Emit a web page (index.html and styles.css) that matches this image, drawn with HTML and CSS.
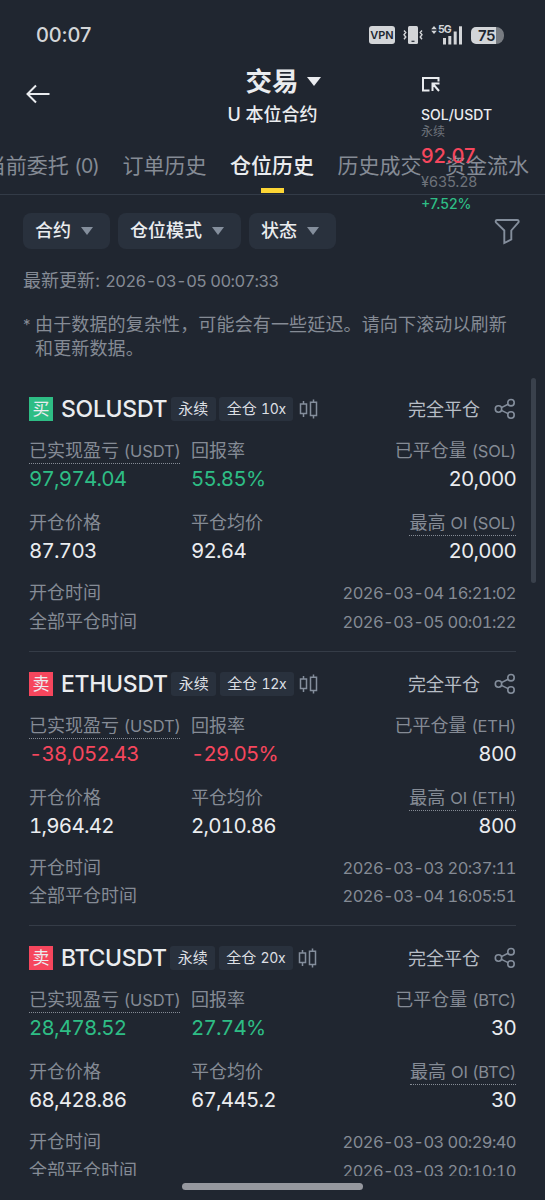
FILE: index.html
```html
<!DOCTYPE html>
<html lang="zh-CN">
<head>
    <meta charset="UTF-8">
    <meta name="viewport" content="width=device-width, initial-scale=1.0">
    <title>仓位历史</title>
    <link rel="stylesheet" href="styles.css">
</head>
<body>
    <!-- shared icons -->
    <svg class="sprite" width="0" height="0">
        <symbol id="icon-candles" viewBox="0 0 20 20">
            <path d="M4.5 2v3M4.5 14.5V18M14.5 0.5v2.7M14.5 16.5v3M1.5 5h6v9.5h-6zM11.5 3.2h6v13.3h-6z"/>
        </symbol>
        <symbol id="icon-share" viewBox="0 0 22 22">
            <circle cx="4.500" cy="11" r="3.200"/>
            <circle cx="17" cy="4.700" r="3.200"/>
            <circle cx="17" cy="17" r="3.200"/>
            <path d="M7.4 9.6l6.7-3.4M7.4 12.4l6.7 3.2"/>
        </symbol>
    </svg>

    <div class="phone">
        <div class="status-bar">
            <span class="clock">00:07</span>
            <div class="status-icons">
                <span class="vpn">VPN</span>
                <svg class="vibrate" width="20" height="20" viewBox="0 0 20 20">
                    <rect x="5" y="1" width="10" height="18" rx="1.5" fill="#d3d5d8"/>
                    <path d="M8.5 16.3h3" stroke="#202630" stroke-width="1.2"/>
                    <path d="M1 5.5l1.8 2L1 9.8l1.8 2.2L1 14.3M19 5.5l-1.8 2L19 9.8l-1.8 2.2 1.8 2.3" fill="none" stroke="#d3d5d8" stroke-width="1.4"/>
                </svg>
                <div class="signal">
                    <svg width="32" height="20" viewBox="0 0 32 20" fill="#d3d5d8">
                        <path d="M0.2 4.3L3 1l2.8 3.3zM0.2 5.7L3 9l2.8-3.300z"/>
                        <rect x="12" y="13" width="3" height="6.5"/>
                        <rect x="17.300" y="11" width="3" height="8.5"/>
                        <rect x="22.700" y="6.5" width="3" height="13"/>
                        <rect x="28" y="1.3" width="3" height="18.2"/>
                    </svg>
                    <span>5G</span>
                </div>
                <span class="battery">75</span>
            </div>
        </div>

        <header class="header">
            <svg class="back" width="26" height="22" viewBox="0 0 26 22">
                <path d="M24.5 11H2.5M11 2.5L2.5 11l8.5 8.5"/>
            </svg>
            <div class="title">
                <h1>交易<span class="caret"></span></h1>
                <p>U 本位合约</p>
            </div>
        </header>

        <nav class="tabs">
            <span>当前委托 <small>(0)</small></span>
            <span>订单历史</span>
            <span class="active">仓位历史</span>
            <span>历史成交</span>
            <span>资金流水</span>
        </nav>

        <div class="filters">
            <button>合约<span class="caret"></span></button>
            <button>仓位模式<span class="caret"></span></button>
            <button>状态<span class="caret"></span></button>
            <svg class="funnel" width="28" height="28" viewBox="0 0 28 28">
                <path d="M4.2 3H24c1.6 0 2.2 1.5 1.2 2.6L18.3 13.5v9L11.3 26V13.5L3.2 5.6C2.2 4.5 2.8 3 4.2 3z"/>
            </svg>
        </div>

        <main class="content">
            <p class="updated">最新更新: <span class="num">2026-03-05 00:07:33</span></p>
            <div class="note">
                <span>*</span>
                <p>由于数据的复杂性，可能会有一些延迟。请向下滚动以刷新<br>和更新数据。</p>
            </div>

            <section class="card">
                <div class="card-head">
                    <span class="side buy">买</span>
                    <h2>SOLUSDT</h2>
                    <span class="tag">永续</span>
                    <span class="tag">全仓 <span class="num">10x</span></span>
                    <svg class="candles"><use href="#icon-candles"/></svg>
                    <span class="state">完全平仓</span>
                    <svg class="share"><use href="#icon-share"/></svg>
                </div>
                <div class="stats">
                    <div>
                        <span class="label dotted">已实现盈亏 <span class="num">(USDT)</span></span>
                        <span class="value green">97,974.04</span>
                    </div>
                    <div>
                        <span class="label">回报率</span>
                        <span class="value green">55.85%</span>
                    </div>
                    <div>
                        <span class="label">已平仓量 <span class="num">(SOL)</span></span>
                        <span class="value">20,000</span>
                    </div>
                    <div>
                        <span class="label">开仓价格</span>
                        <span class="value">87.703</span>
                    </div>
                    <div>
                        <span class="label">平仓均价</span>
                        <span class="value">92.64</span>
                    </div>
                    <div>
                        <span class="label dotted">最高 <span class="num">OI (SOL)</span></span>
                        <span class="value">20,000</span>
                    </div>
                </div>
                <div class="time"><span>开仓时间</span><span class="num">2026-03-04 16:21:02</span></div>
                <div class="time"><span>全部平仓时间</span><span class="num">2026-03-05 00:01:22</span></div>
            </section>

            <section class="card">
                <div class="card-head">
                    <span class="side sell">卖</span>
                    <h2>ETHUSDT</h2>
                    <span class="tag">永续</span>
                    <span class="tag">全仓 <span class="num">12x</span></span>
                    <svg class="candles"><use href="#icon-candles"/></svg>
                    <span class="state">完全平仓</span>
                    <svg class="share"><use href="#icon-share"/></svg>
                </div>
                <div class="stats">
                    <div>
                        <span class="label dotted">已实现盈亏 <span class="num">(USDT)</span></span>
                        <span class="value red">-38,052.43</span>
                    </div>
                    <div>
                        <span class="label">回报率</span>
                        <span class="value red">-29.05%</span>
                    </div>
                    <div>
                        <span class="label">已平仓量 <span class="num">(ETH)</span></span>
                        <span class="value">800</span>
                    </div>
                    <div>
                        <span class="label">开仓价格</span>
                        <span class="value">1,964.42</span>
                    </div>
                    <div>
                        <span class="label">平仓均价</span>
                        <span class="value">2,010.86</span>
                    </div>
                    <div>
                        <span class="label dotted">最高 <span class="num">OI (ETH)</span></span>
                        <span class="value">800</span>
                    </div>
                </div>
                <div class="time"><span>开仓时间</span><span class="num">2026-03-03 20:37:11</span></div>
                <div class="time"><span>全部平仓时间</span><span class="num">2026-03-04 16:05:51</span></div>
            </section>

            <section class="card">
                <div class="card-head">
                    <span class="side sell">卖</span>
                    <h2>BTCUSDT</h2>
                    <span class="tag">永续</span>
                    <span class="tag">全仓 <span class="num">20x</span></span>
                    <svg class="candles"><use href="#icon-candles"/></svg>
                    <span class="state">完全平仓</span>
                    <svg class="share"><use href="#icon-share"/></svg>
                </div>
                <div class="stats">
                    <div>
                        <span class="label dotted">已实现盈亏 <span class="num">(USDT)</span></span>
                        <span class="value green">28,478.52</span>
                    </div>
                    <div>
                        <span class="label">回报率</span>
                        <span class="value green">27.74%</span>
                    </div>
                    <div>
                        <span class="label">已平仓量 <span class="num">(BTC)</span></span>
                        <span class="value">30</span>
                    </div>
                    <div>
                        <span class="label">开仓价格</span>
                        <span class="value">68,428.86</span>
                    </div>
                    <div>
                        <span class="label">平仓均价</span>
                        <span class="value">67,445.2</span>
                    </div>
                    <div>
                        <span class="label dotted">最高 <span class="num">OI (BTC)</span></span>
                        <span class="value">30</span>
                    </div>
                </div>
                <div class="time"><span>开仓时间</span><span class="num">2026-03-03 00:29:40</span></div>
                <div class="time"><span>全部平仓时间</span><span class="num">2026-03-03 20:10:10</span></div>
            </section>
        </main>

        <div class="home-bar"></div>

        <!-- floating price widget -->
        <div class="ticker">
            <svg width="20" height="16" viewBox="0 0 20 16">
                <path d="M8.5 14.5H2V2H17.5V5.500M11.5 15V7.5H18.500M12 8l6 7"/>
            </svg>
            <span class="pair">SOL/USDT</span>
            <span class="kind">永续</span>
            <span class="price">92.07</span>
            <span class="fiat">¥635.28</span>
            <span class="change">+7.52%</span>
        </div>
        <div class="scrollbar"></div>
    </div>
</body>
</html>
```

FILE: styles.css
```css
* {
    box-sizing: border-box;
    margin: 0;
    padding: 0;
}
body {
    font-family: Inter, "Noto Sans CJK SC", sans-serif;
    font-size: 18px;
    background: #202630;
    color: #eaecef;
}
.sprite {
    position: absolute;
}
.phone {
    position: relative;
    width: 545px;
    height: 1200px;
    overflow: hidden;
    display: flex;
    flex-direction: column;
    white-space: nowrap;
}
.num {
    font-size: 16.5px;
    letter-spacing: -0.1px;
}
.updated .num,
.time .num {
    font-variant-numeric: tabular-nums;
    letter-spacing: -0.58px;
}
.caret {
    display: inline-block;
    border: 6px solid transparent;
    border-top: 8px solid #848e9c;
    border-bottom: 0;
}

/* status bar */
.status-bar {
    height: 60px;
    padding: 10px 41px 0 36px;
    display: flex;
    align-items: center;
    justify-content: space-between;
    color: #d3d5d8;
}
.clock {
    font-size: 20px;
    font-weight: 500;
    letter-spacing: -0.1px;
}
.status-icons {
    display: flex;
    align-items: center;
}
.vpn {
    width: 26px;
    height: 18px;
    line-height: 18px;
    border-radius: 3px;
    background: #d3d5d8;
    color: #202630;
    font-size: 11px;
    font-weight: 600;
    text-align: center;
}
.vibrate {
    margin-left: 8px;
}
.signal {
    position: relative;
    width: 32px;
    height: 20px;
    margin: 0 8px 0 8px;
}
.signal span {
    position: absolute;
    left: 7px;
    top: 0;
    font-size: 10.5px;
    line-height: 10px;
    font-weight: 700;
    letter-spacing: -0.9px;
}
.battery {
    width: 33px;
    height: 17px;
    line-height: 17px;
    padding-right: 2px;
    border-radius: 5px 8px 8px 5px;
    background: linear-gradient(90deg, #d3d5d8 25px, #777b81 25px);
    color: #202630;
    font-size: 15px;
    font-weight: 600;
    letter-spacing: -0.5px;
    text-align: center;
}

/* header */
.header {
    height: 77px;
    position: relative;
    display: flex;
    justify-content: center;
}
.back {
    position: absolute;
    left: 25px;
    top: 23px;
    fill: none;
    stroke: #eaecef;
    stroke-width: 2;
}
.title {
    text-align: center;
    padding-top: 1px;
}
.title h1 {
    height: 40px;
    display: flex;
    align-items: center;
    font-size: 26.5px;
    line-height: 40px;
    padding-left: 18px;
    margin-right: -5px;
}
.title .caret {
    margin-left: 9px;
    border-width: 9px 7px 0;
    border-top-color: #eaecef;
}
.title p {
    font-weight: 500;
    line-height: 27px;
}

/* tabs */
.tabs {
    height: 58px;
    padding-right: 16px;
    display: flex;
    justify-content: flex-end;
    gap: 23.5px;
    font-size: 21px;
    line-height: 57px;
    color: #858b95;
    border-bottom: 1px solid #333b47;
}
.tabs small {
    font-size: 19.5px;
    letter-spacing: -0.7px;
}
.tabs .active {
    display: flex;
    flex-direction: column;
    align-items: center;
    font-weight: 500;
    color: #eaecef;
}
.tabs .active::after {
    content: "";
    width: 23px;
    height: 5px;
    margin-top: -6px;
    background: #fcd535;
}

/* filters */
.filters {
    height: 72px;
    padding: 0 24px 0 23px;
    display: flex;
    align-items: center;
    gap: 8px;
}
.filters button {
    height: 36px;
    padding: 0 17.5px 0 12px;
    border: 0;
    border-radius: 8px;
    background: #29313d;
    color: #eaecef;
    font: 500 18px/36px Inter, "Noto Sans CJK SC", sans-serif;
    display: flex;
    align-items: center;
}
.filters .caret {
    margin-left: 9.5px;
}
.funnel {
    margin-left: auto;
    fill: none;
    stroke: #848e9c;
    stroke-width: 1.9;
}

/* list */
.content {
    height: 909px;
    overflow: hidden;
    color: #858b95;
}
.updated {
    padding-left: 23px;
    line-height: 28px;
}
.note {
    display: flex;
    margin-top: 18px;
    padding-left: 23px;
    line-height: 23.5px;
    letter-spacing: 0.15px;
}
.note span {
    width: 12px;
    font-size: 15px;
}
.card {
    height: 274.5px;
    margin: 0 29px;
    padding-top: 20px;
    border-bottom: 1px solid #353c47;
}
.note + .card {
    margin-top: 17px;
}
.card-head {
    height: 24px;
    display: flex;
    align-items: center;
}
.side {
    width: 24px;
    height: 24px;
    line-height: 24px;
    font-size: 17px;
    text-align: center;
    color: #eaecef;
}
.buy {
    background: #2ebd85;
}
.sell {
    background: #f6465d;
}
.card h2 {
    margin: 0 3.5px 0 8px;
    font-size: 23px;
    font-weight: 500;
    letter-spacing: -0.3px;
    color: #eaecef;
}
.tag {
    height: 24px;
    line-height: 24px;
    margin-right: 3.5px;
    padding: 0 7.5px;
    border-radius: 3px;
    background: #29313d;
    color: #dcdfe3;
    font-size: 15px;
}
.tag .num {
    font-size: 14px;
    font-variant-numeric: tabular-nums;
    letter-spacing: -0.3px;
}
.candles {
    width: 20px;
    height: 20px;
    margin-left: 2px;
    fill: none;
    stroke: #848e9c;
    stroke-width: 1.5;
}
.state {
    margin: -2px 0 0 auto;
    color: #b7bdc6;
}
.share {
    width: 22px;
    height: 22px;
    margin-left: 14px;
    fill: none;
    stroke: #848e9c;
    stroke-width: 1.6;
}
.stats {
    display: grid;
    grid-template-columns: 162px 1fr auto;
    row-gap: 16px;
    margin-top: 17px;
}
.stats > div {
    display: flex;
    flex-direction: column;
    align-items: flex-start;
}
.stats > div:nth-child(3n) {
    align-items: flex-end;
}
.label {
    height: 26px;
    line-height: 26px;
}
.dotted {
    border-bottom: 1px dotted #858b95;
}
.value {
    font-size: 20.5px;
    line-height: 30px;
    font-variant-numeric: tabular-nums;
    letter-spacing: -0.75px;
    color: #eaecef;
}
.green {
    color: #2ebd85;
}
.red {
    color: #f6465d;
}
.time {
    display: flex;
    justify-content: space-between;
    line-height: 28.5px;
}
.stats + .time {
    margin-top: 13px;
}

/* overlays */
.home-bar {
    width: 181px;
    height: 7px;
    margin: 7px auto 0;
    border-radius: 4px;
    background: #96989f;
}
.scrollbar {
    position: absolute;
    right: 9px;
    top: 378px;
    width: 5px;
    height: 205px;
    border-radius: 3px;
    background: #3a414c;
}
.ticker {
    position: absolute;
    left: 421px;
    top: 76px;
    display: flex;
    flex-direction: column;
    font-size: 14px;
}
.ticker svg {
    fill: none;
    stroke: #eaecef;
    stroke-width: 2;
}
.pair {
    margin-top: 13px;
    line-height: 20px;
    font-weight: 500;
}
.kind {
    font-size: 12px;
    line-height: 14px;
    color: #6d727a;
}
.price {
    font-size: 20px;
    line-height: 34px;
    font-weight: 500;
    color: #f6465d;
}
.fiat {
    font-size: 14.5px;
    line-height: 18px;
    color: #6d727a;
}
.change {
    line-height: 26px;
    font-weight: 500;
    color: #2ebd85;
}
```
